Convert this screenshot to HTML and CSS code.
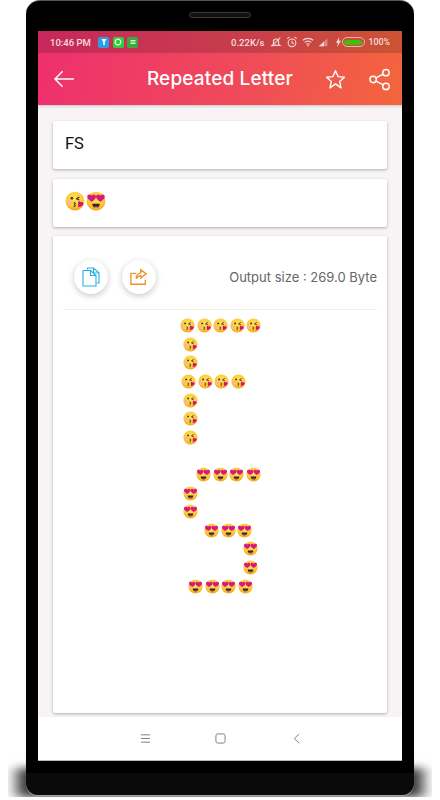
FILE: index.html
```html
<!DOCTYPE html>
<html lang="en">
<head>
  <meta charset="UTF-8">
  <meta name="viewport" content="width=device-width, initial-scale=1">
  <title>Repeated Letter</title>
  <link rel="stylesheet" href="styles.css">
</head>
<body>

  <!-- emoji drawings, reused below -->
  <svg class="defs" width="0" height="0" aria-hidden="true">
    <defs>
      <radialGradient id="face" cx="50%" cy="38%" r="62%">
        <stop offset="0" stop-color="#ffe15e"/>
        <stop offset="0.7" stop-color="#fdc935"/>
        <stop offset="1" stop-color="#f59f1c"/>
      </radialGradient>
      <symbol id="kiss" viewBox="0 0 32 32">
        <circle cx="16" cy="16" r="15" fill="url(#face)"/>
        <circle cx="7" cy="19" r="4" fill="#fbb98f"/>
        <circle cx="11" cy="11.500" r="2" fill="#3b2a1e"/>
        <path d="M18 12.500l5-3M18 12.500l5 2" stroke="#3b2a1e" stroke-width="1.800" fill="none"/>
        <path d="M14 18.500c3 .5 3 2.500 .5 3c2.500 .5 2.500 3 -.5 3.500" stroke="#3b2a1e" stroke-width="1.800" fill="none"/>
        <path d="M21 26v-7.500c0-2.500 3.500-3 4-.5c2-1.500 5.500 .5 4 3.500c-1 2-4 3.500-8 4.500z" fill="#d6127f"/>
      </symbol>
      <symbol id="love" viewBox="0 0 32 32">
        <circle cx="16" cy="16" r="15" fill="url(#face)"/>
        <path d="M9 17c-3-2-7-4.500-7-8c0-3.500 5-4.500 7-1.500c2-3 7-2 7 1.500c0 3.500-4 6-7 8z" fill="#d6197f"/>
        <path d="M23 17c-3-2-7-4.500-7-8c0-3.500 5-4.500 7-1.500c2-3 7-2 7 1.500c0 3.500-4 6-7 8z" fill="#d6197f"/>
        <path d="M10 20.500h12c0 4-2.500 6.500-6 6.500s-6-2.500-6-6.500z" fill="#33261c"/>
        <path d="M12.500 25.500c2-1 5-1 7 0c-2 2-5 2-7 0z" fill="#e8736a"/>
      </symbol>
    </defs>
  </svg>

  <div class="phone">
    <div class="speaker"></div>
    <div class="screen">

      <div class="topbar">
        <div class="status">
          <span class="clock">10:46 PM</span>
          <span class="note blue"><svg viewBox="0 0 8 8"><path d="M1.500 1h5L4.800 4v3H3.200V4z" fill="#fff"/></svg></span>
          <span class="note green"><svg viewBox="0 0 8 8"><circle cx="4" cy="4" r="2.800" fill="none" stroke="#fff" stroke-width="1.200"/></svg></span>
          <span class="note dkgreen"><svg viewBox="0 0 8 8"><path d="M1.500 2h5v1.500h-5zM1.500 4.500h5V6h-5z" fill="#d5efd0"/></svg></span>
          <span class="status-right">
            <span class="speed">0.22K/s</span>
            <svg class="st-icon" viewBox="0 0 14 14" fill="none" stroke="#f6d5d5" stroke-width="1.300"><path d="M4 10V6.500a3 3 0 0 1 6 0V10l1.500 1h-9zM2 12L12 2"/></svg>
            <svg class="st-icon" viewBox="0 0 14 14" fill="none" stroke="#f6d5d5" stroke-width="1.300"><circle cx="7" cy="8" r="4.500"/><path d="M7 5.500V8l2 1M1.500 3L4 1M12.500 3L10 1"/></svg>
            <svg class="st-icon" viewBox="0 0 14 14" fill="none" stroke="#f6d5d5" stroke-width="1.300"><path d="M1 5c3.500-3 8.500-3 12 0M3 7.500c2.500-2 5.500-2 8 0M5 9.800c1.200-.9 2.800-.9 4 0"/><circle cx="7" cy="11.500" r=".9" fill="#f6d5d5" stroke="none"/></svg>
            <svg class="st-icon" viewBox="0 0 14 14"><path d="M1 12l10-9v9z" fill="#dc8a84"/><path d="M1 12l6-5.500V12z" fill="#f6d5d5"/></svg>
            <svg class="bolt" viewBox="0 0 6 12"><path d="M4 0L0 7h2.200L1.500 12 6 4.500H3.500z" fill="#f6d5d5"/></svg>
            <span class="battery"><span class="battery-fill"></span></span>
            <span class="percent">100%</span>
          </span>
        </div>
        <div class="appbar">
          <svg class="back" viewBox="0 0 24 20" fill="none" stroke="#fff" stroke-width="1.600"><path d="M23 10H2M10.500 1.500L2 10l8.500 8.500"/></svg>
          <h1>Repeated Letter</h1>
          <svg class="star" viewBox="0 0 24 24" fill="none" stroke="#fff" stroke-width="1.600" stroke-linejoin="round"><path d="M12 2l3 6.700 7.200.8-5.400 4.900 1.500 7.200L12 17l-6.300 4.600 1.500-7.200L1.800 9.500 9 8.700z"/></svg>
          <svg class="share" viewBox="0 0 24 24" fill="none" stroke="#fff" stroke-width="1.600"><circle cx="18.500" cy="4.500" r="3.500"/><circle cx="4.500" cy="12" r="3.500"/><circle cx="18.500" cy="19.500" r="3.500"/><path d="M7.600 10.300l7.900-4.200M7.600 13.700l7.900 4.200"/></svg>
        </div>
      </div>

      <main class="content">
        <div class="card field text-field">FS</div>
        <div class="card field">
          <svg class="emoji big"><use href="#kiss"/></svg>
          <svg class="emoji big"><use href="#love"/></svg>
        </div>

        <div class="card output">
          <div class="output-head">
            <button class="round-btn">
              <svg viewBox="0 0 18 20" fill="none" stroke="#29aee6" stroke-width="1.100" stroke-linejoin="round"><path d="M5.500 2.500V1h6l5.500 5v10h-2"/><path d="M1 3.500h7.500l5.500 5V19H1z"/><path d="M8.500 3.500v5H14M11.500 1v5H17"/></svg>
            </button>
            <button class="round-btn">
              <svg viewBox="0 0 20 18" fill="none" stroke="#ee9327" stroke-width="1.500"><path d="M7 5H1v12h16v-5"/><path d="M12 1l6 4.500-6 4.500V7.500c-2.500 0-4 1-5 3.500c0-3.500 1.500-6 5-6.500z"/></svg>
            </button>
            <span class="size">Output size : 269.0 Byte</span>
          </div>

          <div class="letter">
            <div class="row"><svg class="emoji"><use href="#kiss"/></svg><svg class="emoji"><use href="#kiss"/></svg><svg class="emoji"><use href="#kiss"/></svg><svg class="emoji"><use href="#kiss"/></svg><svg class="emoji"><use href="#kiss"/></svg></div>
            <div class="row in-3"><svg class="emoji"><use href="#kiss"/></svg></div>
            <div class="row in-3"><svg class="emoji"><use href="#kiss"/></svg></div>
            <div class="row in-1"><svg class="emoji"><use href="#kiss"/></svg><svg class="emoji"><use href="#kiss"/></svg><svg class="emoji"><use href="#kiss"/></svg><svg class="emoji"><use href="#kiss"/></svg></div>
            <div class="row in-3"><svg class="emoji"><use href="#kiss"/></svg></div>
            <div class="row in-3"><svg class="emoji"><use href="#kiss"/></svg></div>
            <div class="row in-3"><svg class="emoji"><use href="#kiss"/></svg></div>
            <div class="row"></div>
            <div class="row in-16"><svg class="emoji"><use href="#love"/></svg><svg class="emoji"><use href="#love"/></svg><svg class="emoji"><use href="#love"/></svg><svg class="emoji"><use href="#love"/></svg></div>
            <div class="row in-3"><svg class="emoji"><use href="#love"/></svg></div>
            <div class="row in-3"><svg class="emoji"><use href="#love"/></svg></div>
            <div class="row in-24"><svg class="emoji"><use href="#love"/></svg><svg class="emoji"><use href="#love"/></svg><svg class="emoji"><use href="#love"/></svg></div>
            <div class="row in-63"><svg class="emoji"><use href="#love"/></svg></div>
            <div class="row in-63"><svg class="emoji"><use href="#love"/></svg></div>
            <div class="row in-8"><svg class="emoji"><use href="#love"/></svg><svg class="emoji"><use href="#love"/></svg><svg class="emoji"><use href="#love"/></svg><svg class="emoji"><use href="#love"/></svg></div>
          </div>
        </div>
      </main>

      <div class="navbar">
        <svg viewBox="0 0 12 10" fill="none" stroke="#77777b" stroke-width="1"><path d="M1 1h10M1 5h10M1 9h10"/></svg>
        <svg viewBox="0 0 12 12" fill="none" stroke="#77777b" stroke-width="1"><rect x="1" y="1" width="10" height="10" rx="2"/></svg>
        <svg viewBox="0 0 8 12" fill="none" stroke="#77777b" stroke-width="1"><path d="M7 1L1.500 6 7 11"/></svg>
      </div>
    </div>
  </div>

</body>
</html>
```

FILE: styles.css
```css
* {
  box-sizing: border-box;
}

html, body {
  height: 800px;
  overflow: hidden;
}

body {
  margin: 0;
  background: #fff;
  font-family: 'Inter', sans-serif;
}

/* shadow the phone drops on the floor */
body::before {
  content: "";
  position: absolute;
  left: 8px;
  top: 768px;
  width: 424px;
  height: 29px;
  background: linear-gradient(90deg, rgba(0, 0, 0, 0), #333 18px, #333 406px, rgba(0, 0, 0, 0));
  filter: blur(4px);
  clip-path: inset(-20px 0 0 0);
}

.defs {
  display: block;
  height: 0;
}

.phone {
  position: relative;
  width: 388px;
  height: 795px;
  margin-left: 26px;
  padding: 0 12px;
  background: linear-gradient(#000 772px, #0a0a0a 772px);
  border-top: 1px solid #555;
  border-radius: 14px 14px 12px 12px;
  box-shadow: 0 1px 1px #aaa;
}

.speaker {
  width: 62px;
  height: 6px;
  margin: 11px auto 13px;
  background: #111;
  border: 1px solid #3a3a3a;
  border-radius: 3px;
}

.screen {
  height: 730px;
  display: flex;
  flex-direction: column;
  background: #f8f4f5;
  border-bottom: 1px solid #bbb;
}

.topbar {
  background: linear-gradient(100deg, #ee2f6e 0%, #ef4a5a 55%, #f3653c 100%);
  color: #fff;
  box-shadow: 0 1px 3px rgba(0, 0, 0, 0.2);
}

.status {
  height: 22px;
  display: flex;
  align-items: center;
  gap: 3.500px;
  padding: 0 12px;
  background: rgba(0, 0, 0, 0.16);
  font-family: 'Roboto', sans-serif;
  font-size: 9.500px;
  font-weight: 500;
  color: #f8dcdc;
}

.clock {
  margin-right: 4px;
}

.note {
  width: 11px;
  height: 11px;
  display: flex;
  padding: 1.500px;
  border-radius: 2px;
}

.note svg {
  width: 8px;
  height: 8px;
}

.blue { background: #2d9fe0; }
.green { background: #2fcf3a; }
.dkgreen { background: #3ea83e; }

.status-right {
  margin-left: auto;
  display: flex;
  align-items: center;
  gap: 4px;
}

.speed {
  margin-right: 1px;
}

.percent {
  font-size: 8.800px;
}

.st-icon {
  width: 12px;
  height: 12px;
}

.bolt {
  width: 5px;
  height: 10px;
  margin-left: 2px;
}

.battery {
  width: 23px;
  height: 10px;
  padding: 1.500px;
  border: 1px solid #e9b5a8;
  border-radius: 5px;
  margin-left: -3px;
}

.battery-fill {
  display: block;
  height: 100%;
  background: #43bd0a;
  border-radius: 3px;
}

.appbar {
  height: 52px;
  position: relative;
  display: flex;
  align-items: center;
  padding: 0 11px 0 15px;
}

.appbar h1 {
  position: absolute;
  left: 0;
  right: 0;
  margin: -2px 0 0;
  text-align: center;
  font-size: 19px;
  font-weight: 500;
  letter-spacing: 0.150px;
}

.back {
  width: 22px;
  height: 18px;
  margin-right: auto;
}

.star {
  width: 21px;
  height: 21px;
  margin-right: 23px;
}

.share {
  width: 22px;
  height: 23px;
}

.content {
  flex: 1;
  display: flex;
  flex-direction: column;
  gap: 9.500px;
  padding: 16px 15px 4px;
}

.card {
  background: #fff;
  border-radius: 2px;
  box-shadow: 0 1px 3px rgba(0, 0, 0, 0.3);
}

.field {
  height: 48px;
  display: flex;
  align-items: center;
  padding: 0 12px 4px;
}

.text-field {
  font-family: 'Roboto', sans-serif;
  font-size: 16.500px;
  color: #111;
}

.emoji {
  width: 15px;
  height: 15px;
  flex: none;
}

.emoji.big {
  width: 20px;
  height: 20px;
}

.big + .big {
  margin-left: 1px;
}

.output {
  flex: 1;
  padding: 0 10px;
}

.output-head {
  height: 74px;
  display: flex;
  align-items: center;
  gap: 14px;
  padding: 8px 0 0 11px;
  border-bottom: 1px solid #eeeeee;
}

.round-btn {
  width: 34px;
  height: 34px;
  display: flex;
  align-items: center;
  justify-content: center;
  padding: 0;
  background: #fff;
  border: none;
  border-radius: 50%;
  box-shadow: 0 2px 6px rgba(0, 0, 0, 0.22);
}

.round-btn svg {
  width: 18px;
  height: 20px;
}

.size {
  margin-left: auto;
  font-size: 13px;
  color: #666;
}

.letter {
  width: 98px;
  margin: 6.500px 0 0 117px;
}

.row {
  height: 18.600px;
  display: flex;
  align-items: center;
  gap: 1.600px;
}

.in-1 { padding-left: 1px; }
.in-3 { padding-left: 3px; }
.in-8 { padding-left: 8px; }
.in-16 { padding-left: 16px; }
.in-24 { padding-left: 24px; }
.in-63 { padding-left: 63px; }

.navbar {
  height: 43px;
  flex: none;
  display: flex;
  align-items: center;
  justify-content: center;
  gap: 64px;
  padding-left: 1px;
  background: #fff;
}

.navbar svg {
  width: 11px;
  height: 11px;
}

.navbar svg:last-child {
  margin-left: 1px;
}
```
